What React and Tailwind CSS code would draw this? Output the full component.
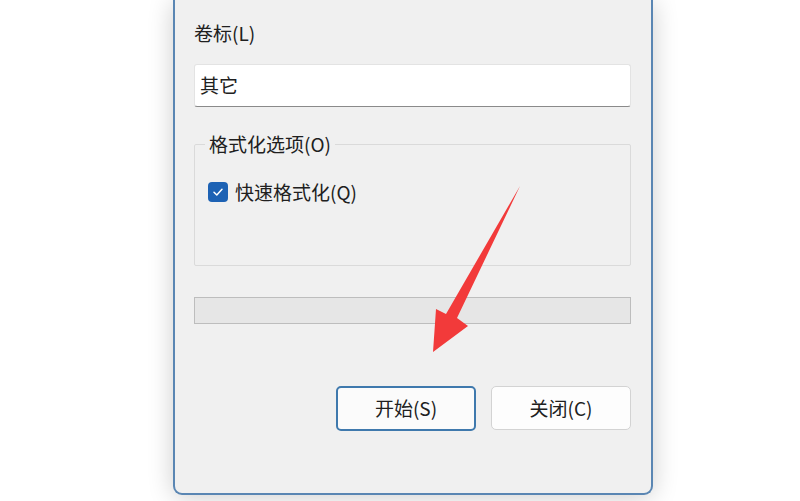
export default function App() {
    return (
        <div
            className="relative h-[501px] w-[800px] overflow-hidden bg-white text-[#202020]"
            style={{ fontFamily: '"Noto Sans CJK SC", "Noto Sans", sans-serif' }}
        >
            <div className="ml-[173px] flex h-[495px] w-[480px] flex-col rounded-b-[9px] border-x-2 border-b-2 border-[#5a86b3] bg-[#f0f0f0] pl-[19px] pr-[20px] pt-[21px] shadow-[0_2px_26px_rgba(0,0,0,0.2)]">
                <div className="text-[19px] leading-[24px]">卷标(L)</div>

                <div className="mt-[19px] flex h-[43px] items-center rounded-[3px] border border-[#e3e3e3] border-b-[#8a8a8a] bg-white px-[5px] text-[19px]">
                    其它
                </div>

                <fieldset className="mt-[25px] h-[134px] rounded-[2px] border border-[#dadada] pl-[13px]">
                    <legend className="-ml-[3px] px-[4px] text-[19px] leading-[24px]">格式化选项(O)</legend>
                    <label className="mt-[24px] flex items-center gap-[7px] text-[19px] leading-[24px]">
                        <span className="flex h-[20px] w-[20px] items-center justify-center rounded-[4px] bg-[#1d62b4]">
                            <svg width="12" height="12" viewBox="0 0 12 12" fill="none">
                                <path d="M2 6.3 L4.8 9 L10 3.2" stroke="white" strokeWidth="1.5" strokeLinecap="round" strokeLinejoin="round" />
                            </svg>
                        </span>
                        快速格式化(Q)
                    </label>
                </fieldset>

                <div className="mt-[31px] h-[27px] border border-[#bdbdbd] bg-[#e6e6e6]" />

                <div className="mt-[62px] flex justify-end gap-[15px]">
                    <button className="h-[45px] w-[140px] rounded-[5px] border-2 border-[#3f79ad] bg-[#fbfbfb] text-[19px]">
                        开始(S)
                    </button>
                    <button className="h-[44px] w-[140px] rounded-[5px] border border-[#d3d3d3] bg-[#fdfdfd] text-[19px]">
                        关闭(C)
                    </button>
                </div>
            </div>

            {/* red annotation arrow */}
            <svg className="absolute left-0 top-0" width="800" height="501">
                <polygon
                    points="520,186 457,318 468,326 433,352 436,309 446,314"
                    fill="#f23a3a"
                />
            </svg>
        </div>
    );
}
